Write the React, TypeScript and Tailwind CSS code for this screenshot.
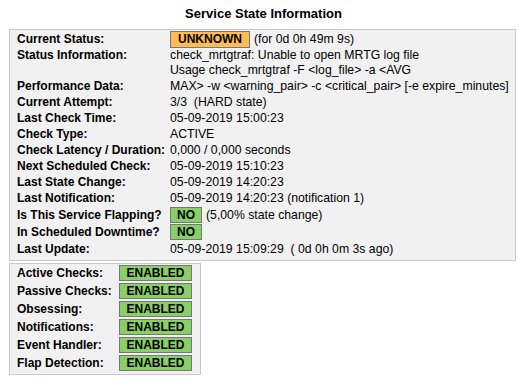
const Badge = ({
  text,
  className,
}: {
  text: string;
  className: string;
}) => (
  <span
    className={
      'inline-block border border-[#777777] text-[12px] font-bold leading-[14px] text-black ' +
      className
    }
  >
    {text}
  </span>
);

const Row = ({
  label,
  children,
  h = 'h-[16px]',
}: {
  label: string;
  children: React.ReactNode;
  h?: string;
}) => (
  <div className={'flex items-center leading-[16px] ' + h}>
    <div className="w-[153px] shrink-0 font-bold">{label}</div>
    <div className="flex items-center whitespace-nowrap text-[12.25px]">{children}</div>
  </div>
);

const features = [
  'Active Checks:',
  'Passive Checks:',
  'Obsessing:',
  'Notifications:',
  'Event Handler:',
  'Flap Detection:',
];

export default function App() {
  return (
    <div className="h-[386px] w-[527px] bg-white font-['Liberation_Sans',Arial,sans-serif] text-[12px] text-black">
      <div className="pt-[6px] text-center text-[13px] font-bold leading-[16px]">
        Service State Information
      </div>

      <div className="ml-[9px] mt-[7px] w-[507px] border border-[#c8c8c8] bg-[#f2f1f1] pb-[3px] pl-[7px]">
        <Row label="Current Status:" h="h-[18px]">
          <Badge text="UNKNOWN" className="bg-[#ffbb55] px-[7px] leading-[15px]" />
          <span className="ml-[4px]">(for 0d 0h 49m 9s)</span>
        </Row>
        <div className="flex leading-[15px]">
          <div className="w-[153px] shrink-0 font-bold">Status Information:</div>
          <div className="whitespace-nowrap text-[12.25px]">
            <div>check_mrtgtraf: Unable to open MRTG log file</div>
            <div>{'Usage check_mrtgtraf -F <log_file> -a <AVG'}</div>
          </div>
        </div>
        <Row label="Performance Data:">
          {'MAX> -w <warning_pair> -c <critical_pair> [-e expire_minutes]'}
        </Row>
        <Row label="Current Attempt:">
          <span className="whitespace-pre">3/3  (HARD state)</span>
        </Row>
        <Row label="Last Check Time:">05-09-2019 15:00:23</Row>
        <Row label="Check Type:">ACTIVE</Row>
        <Row label="Check Latency / Duration:">0,000 / 0,000 seconds</Row>
        <Row label="Next Scheduled Check:">05-09-2019 15:10:23</Row>
        <Row label="Last State Change:">05-09-2019 14:20:23</Row>
        <Row label="Last Notification:">
          05-09-2019 14:20:23 (notification 1)
        </Row>
        <Row label="Is This Service Flapping?" h="h-[17px]">
          <Badge text="NO" className="w-[32px] bg-[#88d066] text-center" />
          <span className="ml-[4px]">(5,00% state change)</span>
        </Row>
        <Row label="In Scheduled Downtime?" h="h-[18px]">
          <Badge text="NO" className="w-[32px] bg-[#88d066] text-center" />
        </Row>
        <Row label="Last Update:">
          <span className="whitespace-pre">
            05-09-2019 15:09:29  ( 0d 0h 0m 3s ago)
          </span>
        </Row>
      </div>

      <div className="ml-[9px] mt-[2px] w-[192px] border border-[#c8c8c8] bg-[#f2f1f1] pb-[2px] pl-[7px]">
        {features.map((f) => (
          <div key={f} className="flex h-[18px] items-center leading-[16px]">
            <div className="w-[102px] shrink-0 font-bold">{f}</div>
            <Badge text="ENABLED" className="w-[73px] bg-[#88d066] text-center" />
          </div>
        ))}
      </div>
    </div>
  );
}
